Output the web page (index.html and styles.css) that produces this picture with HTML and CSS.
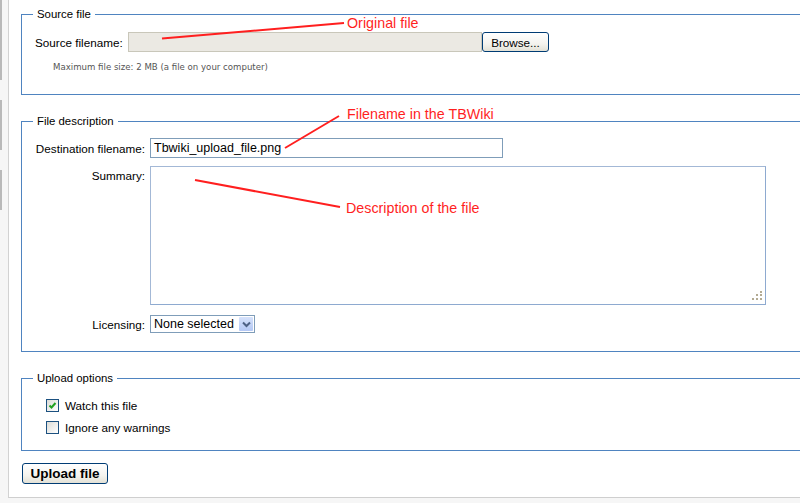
FILE: index.html
```html
<!DOCTYPE html>
<html>
<head>
<meta charset="utf-8">
<title>Upload file</title>
<link rel="stylesheet" href="styles.css">
</head>
<body>
<div class="shell">
  <div class="rail"><span class="seg s1"></span><span class="seg s2"></span><span class="seg s3"></span></div>
  <div class="page">
    <form class="upload">
      <fieldset class="fs fs-source">
        <legend>Source file</legend>
        <div class="src-row">
          <label class="src-label">Source filename:</label>
          <span class="file-input"></span>
          <span class="btn browse">Browse...</span>
        </div>
        <p class="hint">Maximum file size: 2 MB (a file on your computer)</p>
      </fieldset>

      <fieldset class="fs fs-desc">
        <legend>File description</legend>
        <div class="desc-grid">
          <label class="lbl">Destination filename:</label>
          <span class="text-input">Tbwiki_upload_file.png</span>
          <label class="lbl lbl-top">Summary:</label>
          <span class="textarea">
            <svg class="grip" width="10" height="10" viewBox="0 0 10 10"><g fill="#b3ab94"><rect x="8" y="0" width="2" height="2"/><rect x="4" y="3" width="2" height="2"/><rect x="8" y="3" width="2" height="2"/><rect x="0" y="7" width="2" height="2"/><rect x="4" y="7" width="2" height="2"/><rect x="8" y="7" width="2" height="2"/></g></svg>
          </span>
          <label class="lbl lbl-last">Licensing:</label>
          <span class="select">None selected<span class="arrow"><svg width="9" height="7" viewBox="0 0 9 7"><path d="M1 1.5 L4.5 5 L8 1.5" fill="none" stroke="#4d6185" stroke-width="2"/></svg></span></span>
        </div>
      </fieldset>

      <fieldset class="fs fs-opts">
        <legend>Upload options</legend>
        <div class="check-row"><span class="box"><svg width="11" height="11" viewBox="0 0 11 11"><path d="M2.5 5.5 L4.5 7.5 L8.5 3" fill="none" stroke="#21a121" stroke-width="2"/></svg></span><span class="check-text">Watch this file</span></div>
        <div class="check-row"><span class="box"></span><span class="check-text">Ignore any warnings</span></div>
      </fieldset>

      <span class="btn upload-btn">Upload file</span>
    </form>
  </div>
</div>

<svg class="notes" width="800" height="503" viewBox="0 0 800 503">
  <g stroke="#ff1f1f" stroke-width="2" fill="none">
    <line x1="162" y1="38.5" x2="344" y2="23"/>
    <line x1="285" y1="148" x2="339" y2="116"/>
    <line x1="195" y1="180" x2="340" y2="207"/>
  </g>
  <g class="note-text" fill="#ff1f1f">
    <text x="347" y="28">Original file</text>
    <text x="347" y="119">Filename in the TBWiki</text>
    <text x="346" y="213">Description of the file</text>
  </g>
</svg>
</body>
</html>
```

FILE: styles.css
```css
html, body {
  margin: 0;
  height: 100%;
  overflow: hidden;
}

body {
  position: relative;
  background: #f6f6f6;
  font-family: "Liberation Sans", Arial, sans-serif;
  color: #000;
}

.shell {
  display: flex;
  height: 498px;
}

.rail {
  flex: none;
  width: 8px;
  display: flex;
  flex-direction: column;
}

.seg {
  width: 2px;
  background: #b9b9b9;
}
.s1 { height: 80px; }
.s2 { height: 50px; margin-top: 20px; }
.s3 { height: 40px; margin-top: 20px; }

.page {
  flex: 1;
  min-width: 0;
  box-sizing: border-box;
  height: 498px;
  background: #fff;
  border-left: 1px solid #d2d2d2;
  border-bottom: 1px solid #cfcfcf;
}

.upload {
  margin: 0;
  padding: 7px 0 0 12px;
}

.fs {
  margin: 0 0 19px;
  min-width: 0;
  border: 1px solid #4f84c0;
  border-right: none;
  padding: 11px 0 22px 11px;
}

.fs legend {
  padding: 0 4px;
  font-size: 11.4px;
  line-height: 14px;
}

/* Source file */
.src-row {
  display: flex;
  align-items: center;
  height: 20px;
  margin-left: 2px;
}

.src-label {
  flex: none;
  width: 88px;
  margin-right: 5px;
  font-size: 11.7px;
}

.file-input {
  flex: none;
  box-sizing: border-box;
  width: 354px;
  height: 20px;
  background: #ebe9e3;
  border: 1px solid #c9c7ba;
}

.btn {
  box-sizing: border-box;
  display: inline-flex;
  align-items: center;
  justify-content: center;
  border: 1px solid #003c74;
  border-radius: 3px;
  background: linear-gradient(#ffffff, #f4f3ee 60%, #e3e1d6);
  color: #000;
}

.browse {
  flex: none;
  width: 67px;
  height: 20px;
  font-size: 11.7px;
}

.hint {
  margin: 10px 0 0 20px;
  font-family: "DejaVu Sans", Verdana, sans-serif;
  font-size: 8.6px;
  line-height: 10px;
  color: #555;
}

/* File description */
.fs-desc {
  padding-top: 10px;
  padding-bottom: 18px;
}

.desc-grid {
  display: grid;
  grid-template-columns: 112px auto;
  column-gap: 5px;
  align-items: center;
  justify-items: start;
}

.lbl {
  justify-self: end;
  font-size: 11.7px;
}

.lbl-top {
  align-self: start;
  margin-top: 8px;
  padding-top: 3px;
}

.lbl-last {
  margin-top: 10px;
}

.text-input {
  box-sizing: border-box;
  width: 353px;
  height: 20px;
  padding-left: 3px;
  border: 1px solid #7f9db9;
  font-size: 12.5px;
  line-height: 18px;
}

.textarea {
  position: relative;
  box-sizing: border-box;
  width: 616px;
  height: 139px;
  margin-top: 8px;
  border: 1px solid #a3b8d6;
  border-right-color: #8eaad0;
  border-bottom-color: #8eaad0;
}

.grip {
  position: absolute;
  right: 3px;
  bottom: 3px;
}

.select {
  position: relative;
  box-sizing: border-box;
  width: 105px;
  height: 18px;
  margin-top: 10px;
  padding-left: 3px;
  border: 1px solid #7f9db9;
  font-size: 12.5px;
  line-height: 16px;
}

.arrow {
  position: absolute;
  top: 1px;
  right: 1px;
  width: 14px;
  height: 14px;
  display: flex;
  align-items: center;
  justify-content: center;
  background: linear-gradient(#d6e2fb, #b4c8f5);
  border-radius: 1px;
}

/* Upload options */
.fs-opts {
  margin-bottom: 0;
  padding-top: 9px;
  padding-bottom: 12px;
}

.check-row {
  display: flex;
  align-items: center;
  height: 22px;
  padding-left: 13px;
}

.box {
  flex: none;
  box-sizing: border-box;
  width: 13px;
  height: 13px;
  border: 1px solid #1c5180;
  background: linear-gradient(135deg, #dcdcd7, #ffffff);
  display: flex;
  align-items: center;
  justify-content: center;
}

.check-text {
  margin-left: 6px;
  font-size: 11.7px;
}

.upload-btn {
  width: 86px;
  height: 21px;
  margin: 12px 0 0 1px;
  font-size: 13.5px;
  font-weight: bold;
}

/* annotations */
.notes {
  position: absolute;
  top: 0;
  left: 0;
  pointer-events: none;
}

.note-text {
  font-family: "Liberation Sans", Arial, sans-serif;
  font-size: 14.3px;
}
```
